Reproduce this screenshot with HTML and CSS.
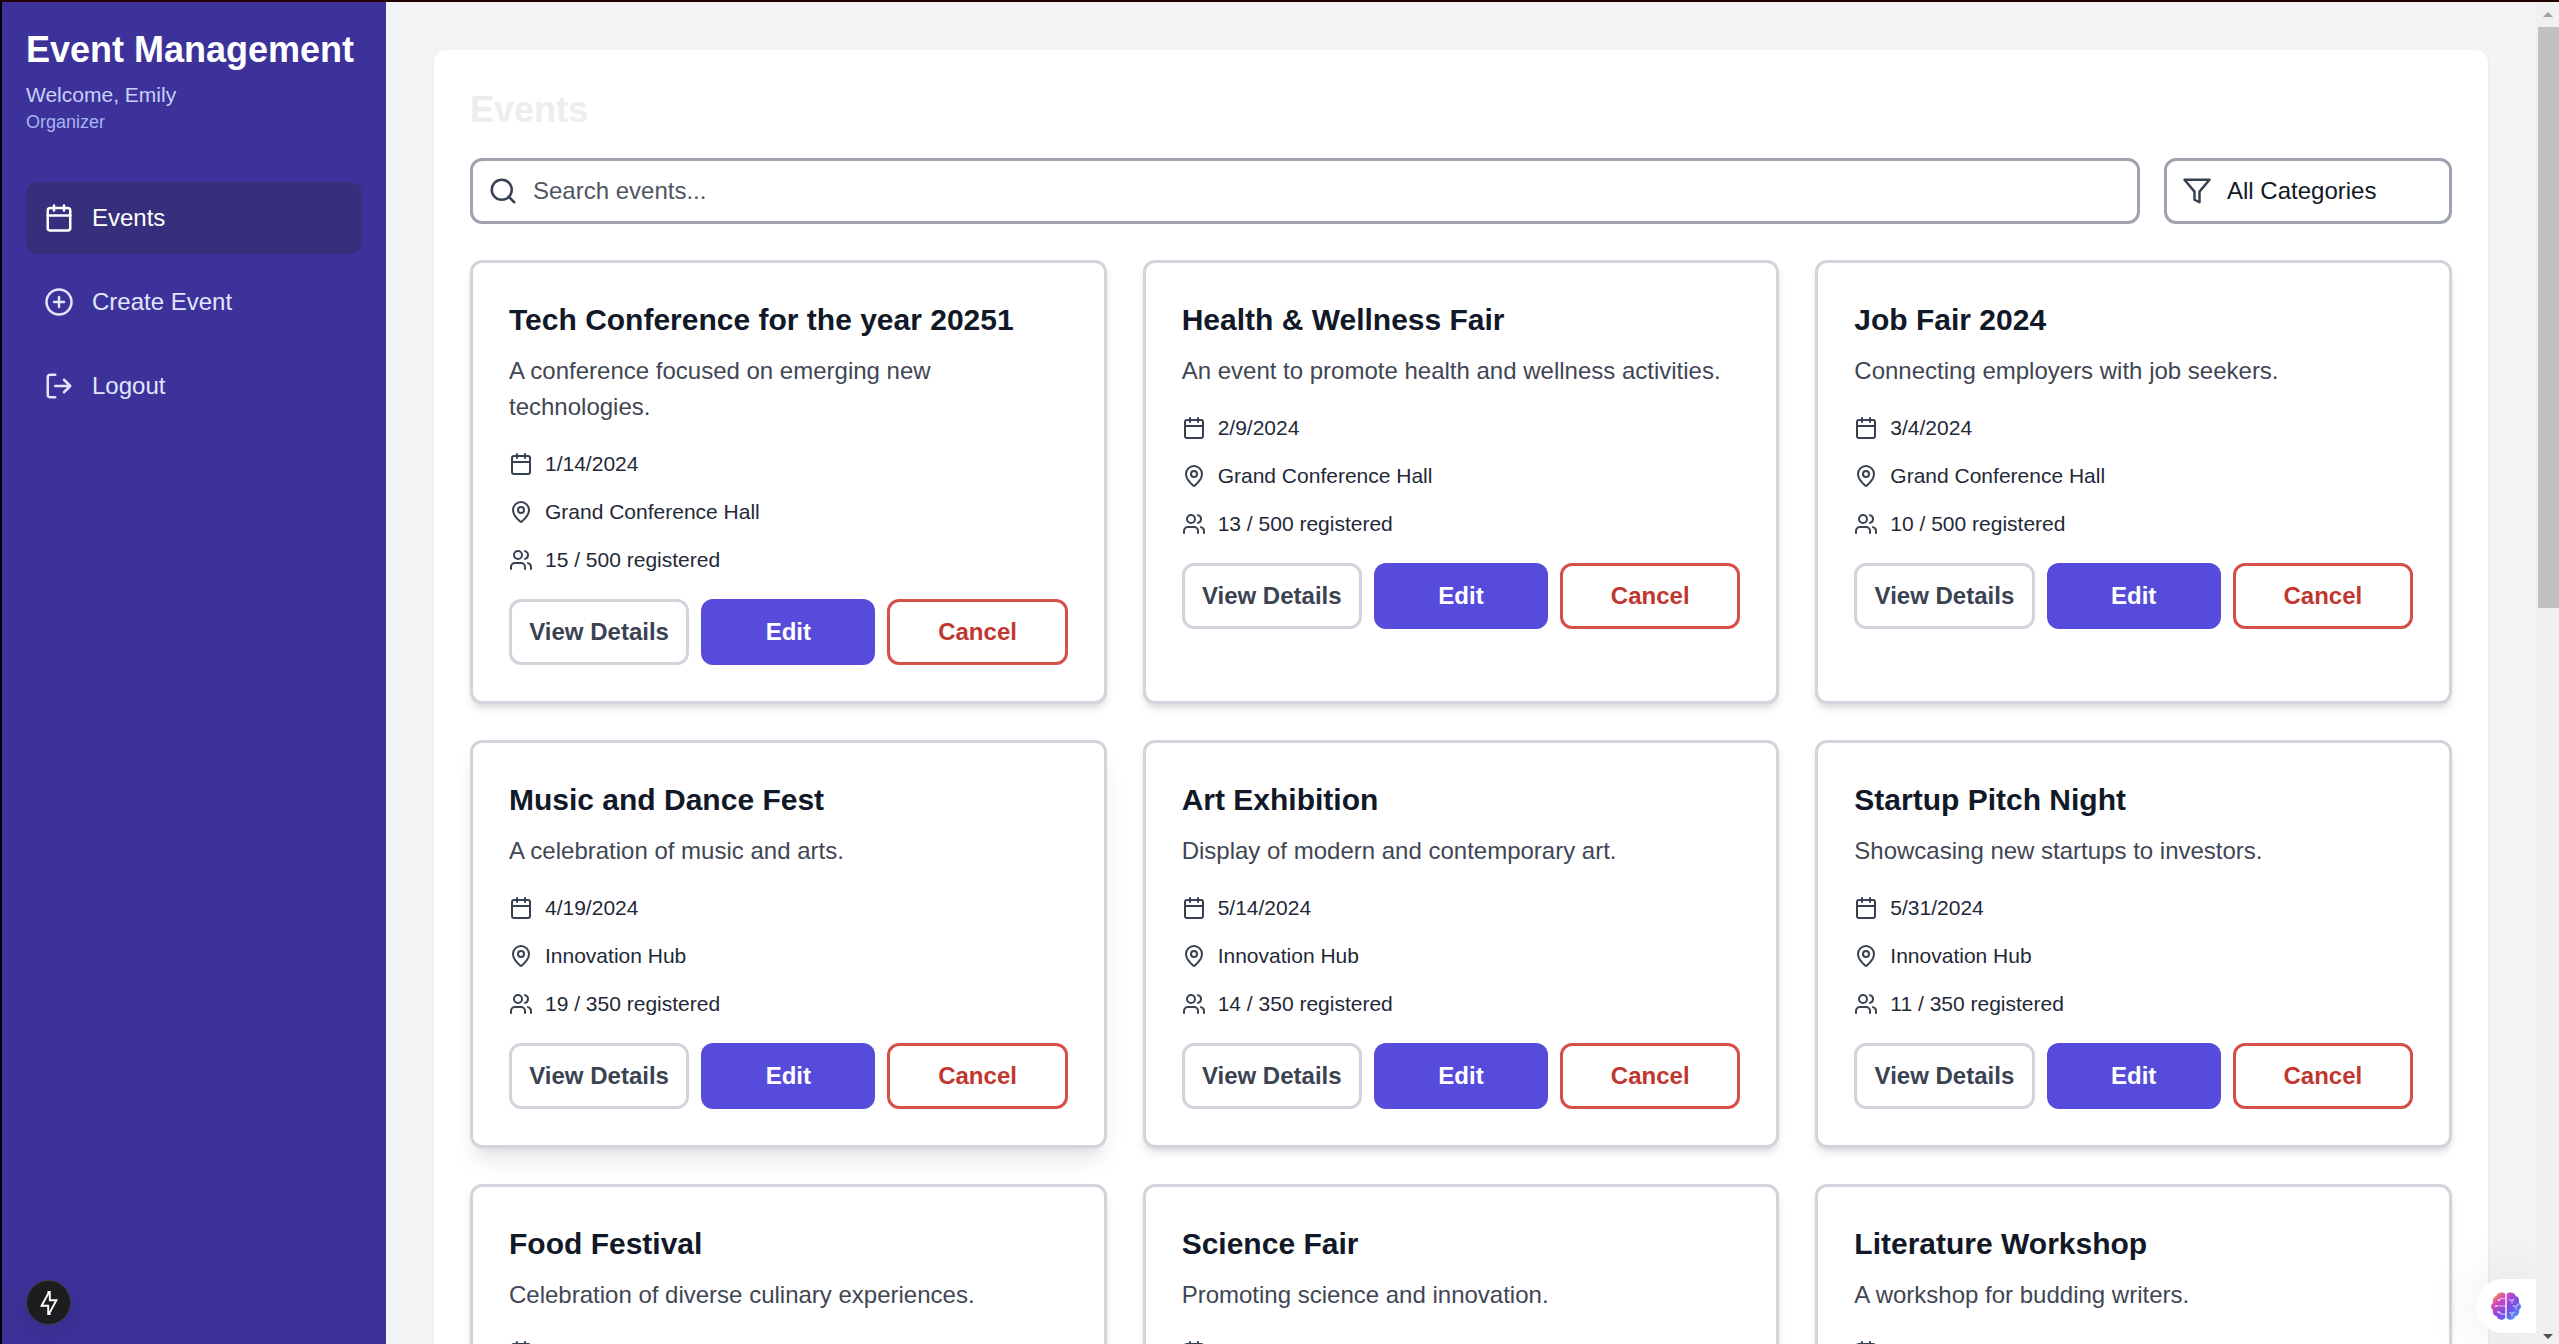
FILE: index.html
```html
<!DOCTYPE html>
<html lang="en">
<head>
<meta charset="utf-8">
<title>Event Management</title>
<link rel="stylesheet" href="styles.css">
</head>
<body>
<svg width="0" height="0" class="defs" aria-hidden="true">
  <symbol id="calendar" viewBox="0 0 24 24"><path d="M8 2v4M16 2v4"/><rect x="3" y="4" width="18" height="18" rx="2"/><path d="M3 10h18"/></symbol>
  <symbol id="plus" viewBox="0 0 24 24"><circle cx="12" cy="12" r="10"/><path d="M8 12h8M12 8v8"/></symbol>
  <symbol id="logout" viewBox="0 0 24 24"><path d="M9 21H5a2 2 0 0 1-2-2V5a2 2 0 0 1 2-2h4"/><path d="m16 17 5-5-5-5M21 12H9"/></symbol>
  <symbol id="search" viewBox="0 0 24 24"><circle cx="11" cy="11" r="8"/><path d="m21 21-4.3-4.3"/></symbol>
  <symbol id="filter" viewBox="0 0 24 24"><path d="M22 3H2l8 9.46V19l4 2v-8.54L22 3z"/></symbol>
  <symbol id="pin" viewBox="0 0 24 24"><path d="M20 10c0 4.993-5.539 10.193-7.399 11.799a1 1 0 0 1-1.202 0C9.539 20.193 4 14.993 4 10a8 8 0 0 1 16 0"/><circle cx="12" cy="10" r="3"/></symbol>
  <symbol id="users" viewBox="0 0 24 24"><path d="M16 21v-2a4 4 0 0 0-4-4H6a4 4 0 0 0-4 4v2"/><circle cx="9" cy="7" r="4"/><path d="M22 21v-2a4 4 0 0 0-3-3.87M16 3.13a4 4 0 0 1 0 7.75"/></symbol>
</svg>
<div class="app">
  <aside class="sidebar">
    <h1 class="brand">Event Management</h1>
    <p class="welcome">Welcome, Emily</p>
    <p class="role">Organizer</p>
    <nav class="nav">
      <a class="nav-item active"><svg class="icon"><use href="#calendar"/></svg>Events</a>
      <a class="nav-item"><svg class="icon"><use href="#plus"/></svg>Create Event</a>
      <a class="nav-item"><svg class="icon"><use href="#logout"/></svg>Logout</a>
    </nav>
  </aside>
  <main class="main">
    <section class="panel">
      <h2 class="heading">Events</h2>
      <div class="filters">
        <div class="field search"><svg class="icon"><use href="#search"/></svg><span>Search events...</span></div>
        <div class="field category"><svg class="icon"><use href="#filter"/></svg><span>All Categories</span></div>
      </div>
      <div class="grid" id="grid"></div>
    </section>
  </main>
  <div class="scrollbar"><i class="arrow up"></i><i class="thumb"></i><i class="arrow down"></i></div>
</div>
<div class="dev-badge"><svg viewBox="0 0 18 24"><path d="M8.4 1v1.2L1.6 14.8H8.2V23h1.4v-1.2L16.4 9.2H9.8V1z"/></svg></div>
<div class="brain">
  <svg viewBox="0 0 30 28">
    <defs><linearGradient id="bg" x1="0" y1="0" x2="1" y2="1"><stop offset=".08" stop-color="#f0a030"/><stop offset=".28" stop-color="#d848b8"/><stop offset=".52" stop-color="#8a48e0"/><stop offset=".7" stop-color="#6260ec"/><stop offset="1" stop-color="#4cc3ff"/></linearGradient></defs>
    <path fill="url(#bg)" d="M14.3 1.8C11.5-.6 6.4 0 5.2 4 2.4 5 1.4 8 2 11c-2.6 2-2.6 5 0 7-1 3 .8 5.6 3.6 6.2C6.8 28 12 29 14.3 26zM15.7 1.8c2.8-2.4 7.900-1.800 9.1 2.200 2.800 1 3.800 4 3.200 7 2.600 2 2.600 5 0 7 1 3-.800 5.600-3.600 6.200C23.200 28 18 29 15.700 26z"/>
    <path fill="none" stroke="#fff" stroke-opacity=".65" stroke-width="1.1" stroke-linecap="round" d="M8 8c1.500-1.600 3.500-2 6-2M5 14h9M7.500 20c2 2 4 2.600 6.500 2M18.500 7.500l2.500 1.500 2-2M21 9v2M22 14l3 .5 3-2.500M25 14.500V17M18.500 20.500l2.500 1 2.500-1.500M21 21.500V24"/>
    <path fill="none" stroke="#fff" stroke-width="2" stroke-linecap="round" stroke-opacity=".8" d="M7.600 8.200v0M5 14v0M7.400 19.900v0"/>
  </svg>
</div>
<script src="events.js"></script>
</body>
</html>
```
FILE: styles.css
```css
* { box-sizing: border-box; margin: 0; padding: 0; }
html { font-size: 24px; }
body {
  height: 1344px;
  overflow: hidden;
  border-top: 2px solid #240000;
  border-left: 2px solid #000;
  background: #f3f4f6;
  font: 24px/36px "Liberation Sans", Arial, sans-serif;
  color: #111827;
}
.defs { position: absolute; }
.app { display: flex; height: 1342px; overflow: hidden; }
.icon {
  width: 30px; height: 30px; flex: none;
  fill: none; stroke: currentColor; stroke-width: 2;
  stroke-linecap: round; stroke-linejoin: round;
}

.sidebar { width: 384px; flex: none; padding: 24px; background: #3c329a; color: #fff; }
.brand { font-size: 36px; line-height: 48px; white-space: nowrap; }
.welcome { margin-top: 6px; font-size: 21px; line-height: 30px; color: #c9d0f8; }
.role { font-size: 18px; line-height: 24px; color: #a7b2f3; }
.nav { display: flex; flex-direction: column; gap: 12px; margin-top: 48px; }
.nav-item {
  display: flex; align-items: center; gap: 18px;
  padding: 18px; border-radius: 12px; color: #e0e6fc;
}
.nav-item.active { background: #362f7b; color: #fff; }

.main { flex: 1; min-width: 0; padding: 48px; }
.panel { padding: 36px; background: #fff; border-radius: 12px; box-shadow: 0 1px 4px rgba(0, 0, 0, .06); }
.heading { margin-bottom: 24px; font-size: 36px; line-height: 48px; color: #ededed; }
.filters { display: flex; gap: 24px; margin-bottom: 36px; }
.field {
  display: flex; align-items: center; gap: 15px;
  height: 66px; padding-left: 15px;
  border: 3px solid #9fa3af; border-radius: 12px; background: #fff;
}
.field .icon { color: #374151; }
.search { flex: 1; color: #4f5562; }
.category { width: 288px; }

.grid { display: grid; grid-template-columns: repeat(3, 1fr); gap: 36px; }
.card {
  padding: 36px; background: #fff;
  border: 3px solid #d1d5db; border-radius: 12px;
  box-shadow: 0 6px 9px -1.5px rgba(0, 0, 0, .1), 0 3px 6px -3px rgba(0, 0, 0, .1);
}
.card.raised { box-shadow: 0 15px 22px -4px rgba(0, 0, 0, .1), 0 6px 9px -6px rgba(0, 0, 0, .1); }
.card h3 { margin-bottom: 12px; font-size: 30px; line-height: 42px; }
.card p { margin-bottom: 24px; color: #3f4654; }
.meta { display: grid; gap: 18px; margin-bottom: 24px; list-style: none; font-size: 21px; line-height: 30px; color: #1f2937; }
.meta li { display: flex; align-items: center; gap: 12px; min-height: 30px; }
.meta .icon { width: 24px; height: 24px; color: #374151; }
.actions { display: flex; gap: 12px; }
.btn {
  flex: 1; height: 66px; padding: 0 12px;
  display: flex; align-items: center; justify-content: center;
  border-radius: 12px; font-weight: 700; white-space: nowrap;
}
.view { border: 3px solid #d1d5db; color: #3b4251; }
.edit { background: #574bdb; color: #fff; }
.cancel { border: 3px solid #d5504a; color: #c0372f; }

.scrollbar { position: relative; width: 23px; flex: none; background: #f0f0f0; }
.thumb { position: absolute; left: 2px; right: 0; top: 25px; height: 581px; background: #c1c1c1; }
.arrow { position: absolute; left: 7px; border: 5.5px solid transparent; }
.up { top: 4.5px; border-bottom-color: #a3a3a3; }
.down { bottom: 0; border-top-color: #505050; }

.dev-badge {
  position: absolute; left: 26px; top: 1280px; width: 45px; height: 45px;
  display: grid; place-items: center;
  border: 1.5px solid #3f3f42; border-radius: 50%; background: #1d1d1f;
  box-shadow: 0 9px 36px rgba(0, 0, 0, .14);
}
.dev-badge svg { width: 18px; height: 24px; fill: none; stroke: #fff; stroke-width: 1.9; }
.brain {
  position: absolute; left: 2476px; top: 1279px; width: 60px; height: 54px;
  padding: 13px 15px; border-radius: 27px 0 0 27px; background: #fff;
  box-shadow: 0 0 60px rgba(0, 0, 0, .1);
  clip-path: inset(-100px 0 -100px -100px);
}
.brain svg { display: block; width: 30px; height: 28px; }
```
FILE: events.js
```js
const events = [
  ["Tech Conference for the year 20251", "A conference focused on emerging new technologies.", "1/14/2024", "Grand Conference Hall", "15 / 500"],
  ["Health &amp; Wellness Fair", "An event to promote health and wellness activities.", "2/9/2024", "Grand Conference Hall", "13 / 500"],
  ["Job Fair 2024", "Connecting employers with job seekers.", "3/4/2024", "Grand Conference Hall", "10 / 500"],
  ["Music and Dance Fest", "A celebration of music and arts.", "4/19/2024", "Innovation Hub", "19 / 350"],
  ["Art Exhibition", "Display of modern and contemporary art.", "5/14/2024", "Innovation Hub", "14 / 350"],
  ["Startup Pitch Night", "Showcasing new startups to investors.", "5/31/2024", "Innovation Hub", "11 / 350"],
  ["Food Festival", "Celebration of diverse culinary experiences.", "", "", ""],
  ["Science Fair", "Promoting science and innovation.", "", "", ""],
  ["Literature Workshop", "A workshop for budding writers.", "", "", ""],
];
const icon = (name) => `<svg class="icon"><use href="#${name}"/></svg>`;
document.getElementById("grid").innerHTML = events.map(([title, text, date, place, count], i) => `
  <article class="card${i === 3 ? " raised" : ""}">
    <h3>${title}</h3>
    <p>${text}</p>
    <ul class="meta">
      <li>${icon("calendar")}${date}</li>
      ${place ? `<li>${icon("pin")}${place}</li><li>${icon("users")}${count} registered</li>` : ""}
    </ul>
    ${place ? `<div class="actions"><a class="btn view">View Details</a><a class="btn edit">Edit</a><a class="btn cancel">Cancel</a></div>` : ""}
  </article>`).join("");
```
